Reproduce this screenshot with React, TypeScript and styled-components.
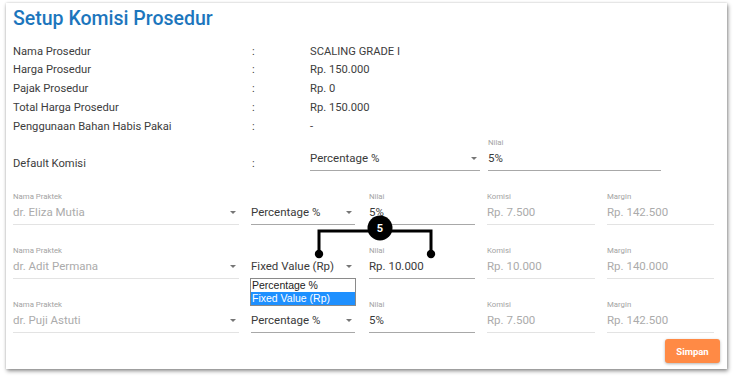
import React from "react";
import styled, { createGlobalStyle } from "styled-components";

const Global = createGlobalStyle`
  html, body { margin: 0; padding: 0; background: #ffffff; }
  body { font-family: Roboto, "Liberation Sans", Arial, sans-serif; }
  * { box-sizing: border-box; }
`;

const Page = styled.div`
  position: relative;
  width: 735px;
  height: 377px;
  padding: 3px 8px 0 6px;
`;

const Card = styled.div`
  width: 721px;
  height: 366px;
  background: #fff;
  box-shadow: 1px 2px 4px rgba(0, 0, 0, 0.45), 0 0 2px rgba(0, 0, 0, 0.15);
  padding: 4px 7px 6px 7px;
  display: flex;
  flex-direction: column;
`;

const Title = styled.h1`
  margin: 0;
  font-size: 19.5px;
  line-height: 24px;
  font-weight: 500;
  color: #1c76bd;
`;

const InfoGrid = styled.div`
  margin-top: 11.6px;
  display: grid;
  grid-template-columns: 239px 58px 1fr;
  grid-auto-rows: 18.75px;
  align-items: center;
  font-size: 11.2px;
  color: #3d3d3d;
`;

const Cell = styled.div`
  line-height: 18.75px;
  white-space: nowrap;
`;

const DefaultRow = styled.div`
  margin-top: 1.6px;
  display: grid;
  grid-template-columns: 239px 58px 178px 173px;
  font-size: 11.2px;
  color: #3d3d3d;
`;

const DefaultLabel = styled.div`
  padding-top: 19px;
  line-height: 14px;
`;

const PraktekRow = styled.div`
  margin-top: 21px;
  display: grid;
  grid-template-columns: 226px 104px 108px 108px 107px;
  column-gap: 12px;
`;

const Field = styled.div<{ $offsetLeft?: number; $offsetRight?: number }>`
  position: relative;
  display: flex;
  flex-direction: column;
  margin-left: ${(p) => p.$offsetLeft ?? 0}px;
  margin-right: ${(p) => p.$offsetRight ?? 0}px;
`;

const FieldLabel = styled.div`
  font-size: 7.8px;
  line-height: 10px;
  height: 10px;
  color: #a3a3a3;
  white-space: nowrap;
`;

const Control = styled.div<{ $disabled?: boolean }>`
  height: 23px;
  display: flex;
  align-items: center;
  justify-content: space-between;
  border-bottom: 1px solid ${(p) => (p.$disabled ? "#e3e3e3" : "#a8a8a8")};
  font-size: 11.5px;
  color: ${(p) => (p.$disabled ? "#ababab" : "#3a3a3a")};
  white-space: nowrap;
  padding-bottom: 1px;
`;

const Arrow = styled.span`
  width: 0;
  height: 0;
  border-left: 3.5px solid transparent;
  border-right: 3.5px solid transparent;
  border-top: 3.5px solid #767676;
  margin-right: 3px;
`;

const DropList = styled.div`
  position: absolute;
  left: -1px;
  top: 32px;
  width: 106px;
  border: 1px solid #8a8a8a;
  background: #fff;
  font-family: "Liberation Sans", Arial, sans-serif;
  font-size: 10.5px;
  z-index: 2;
`;

const DropOption = styled.div<{ $active?: boolean }>`
  height: 13px;
  line-height: 13px;
  padding-left: 1px;
  background: ${(p) => (p.$active ? "#1e90ff" : "#fff")};
  color: ${(p) => (p.$active ? "#fff" : "#222")};
  white-space: nowrap;
`;

const Footer = styled.div`
  margin-top: auto;
  display: flex;
  justify-content: flex-end;
`;

const SaveButton = styled.button`
  width: 55px;
  height: 24px;
  border: none;
  border-radius: 3px;
  background: #ff8a45;
  color: #fff;
  font-family: Roboto, sans-serif;
  font-weight: 700;
  font-size: 9.5px;
  box-shadow: 0 1px 3px rgba(0, 0, 0, 0.3);
  padding: 0;
`;

const Callout = styled.svg`
  position: absolute;
  left: 0;
  top: 0;
  pointer-events: none;
  z-index: 3;
`;

type Praktek = {
  name: string;
  jenis: string;
  nilai: string;
  komisi: string;
  margin: string;
  open?: boolean;
};

const rows: Praktek[] = [
  { name: "dr. Eliza Mutia", jenis: "Percentage %", nilai: "5%", komisi: "Rp. 7.500", margin: "Rp. 142.500" },
  { name: "dr. Adit Permana", jenis: "Fixed Value (Rp)", nilai: "Rp. 10.000", komisi: "Rp. 10.000", margin: "Rp. 140.000", open: true },
  { name: "dr. Puji Astuti", jenis: "Percentage %", nilai: "5%", komisi: "Rp. 7.500", margin: "Rp. 142.500" },
];

const info: [string, string][] = [
  ["Nama Prosedur", "SCALING GRADE I"],
  ["Harga Prosedur", "Rp. 150.000"],
  ["Pajak Prosedur", "Rp. 0"],
  ["Total Harga Prosedur", "Rp. 150.000"],
  ["Penggunaan Bahan Habis Pakai", "-"],
];

export default function App() {
  return (
    <Page>
      <Global />
      <Card>
        <Title>Setup Komisi Prosedur</Title>
        <InfoGrid>
          {info.map(([k, v]) => (
            <React.Fragment key={k}>
              <Cell>{k}</Cell>
              <Cell>:</Cell>
              <Cell>{v}</Cell>
            </React.Fragment>
          ))}
        </InfoGrid>
        <DefaultRow>
          <DefaultLabel>Default Komisi</DefaultLabel>
          <DefaultLabel>:</DefaultLabel>
          <Field $offsetRight={8}>
            <FieldLabel />
            <Control>
              Percentage %
              <Arrow />
            </Control>
          </Field>
          <Field>
            <FieldLabel>Nilai</FieldLabel>
            <Control>5%</Control>
          </Field>
        </DefaultRow>
        {rows.map((r) => (
          <PraktekRow key={r.name}>
            <Field>
              <FieldLabel>Nama Praktek</FieldLabel>
              <Control $disabled>
                {r.name}
                <Arrow />
              </Control>
            </Field>
            <Field>
              <FieldLabel />
              <Control>
                {r.jenis}
                <Arrow />
              </Control>
              {r.open && (
                <DropList>
                  <DropOption>Percentage %</DropOption>
                  <DropOption $active>Fixed Value (Rp)</DropOption>
                </DropList>
              )}
            </Field>
            <Field $offsetLeft={2}>
              <FieldLabel>Nilai</FieldLabel>
              <Control>{r.nilai}</Control>
            </Field>
            <Field>
              <FieldLabel>Komisi</FieldLabel>
              <Control $disabled>{r.komisi}</Control>
            </Field>
            <Field>
              <FieldLabel>Margin</FieldLabel>
              <Control $disabled>{r.margin}</Control>
            </Field>
          </PraktekRow>
        ))}
        <Footer>
          <SaveButton>Simpan</SaveButton>
        </Footer>
      </Card>
      <Callout width="735" height="377" viewBox="0 0 735 377">
        <polyline
          points="319,254 319,231 431,231 431,254"
          fill="none"
          stroke="#000"
          strokeWidth="3"
        />
        <circle cx="319" cy="254" r="4.2" fill="#000" />
        <circle cx="431" cy="254" r="4.2" fill="#000" />
        <circle cx="380" cy="228" r="12.5" fill="#000" />
        <text
          x="380"
          y="232"
          textAnchor="middle"
          fill="#fff"
          fontFamily="Roboto, sans-serif"
          fontWeight="700"
          fontSize="11"
        >
          5
        </text>
      </Callout>
    </Page>
  );
}
